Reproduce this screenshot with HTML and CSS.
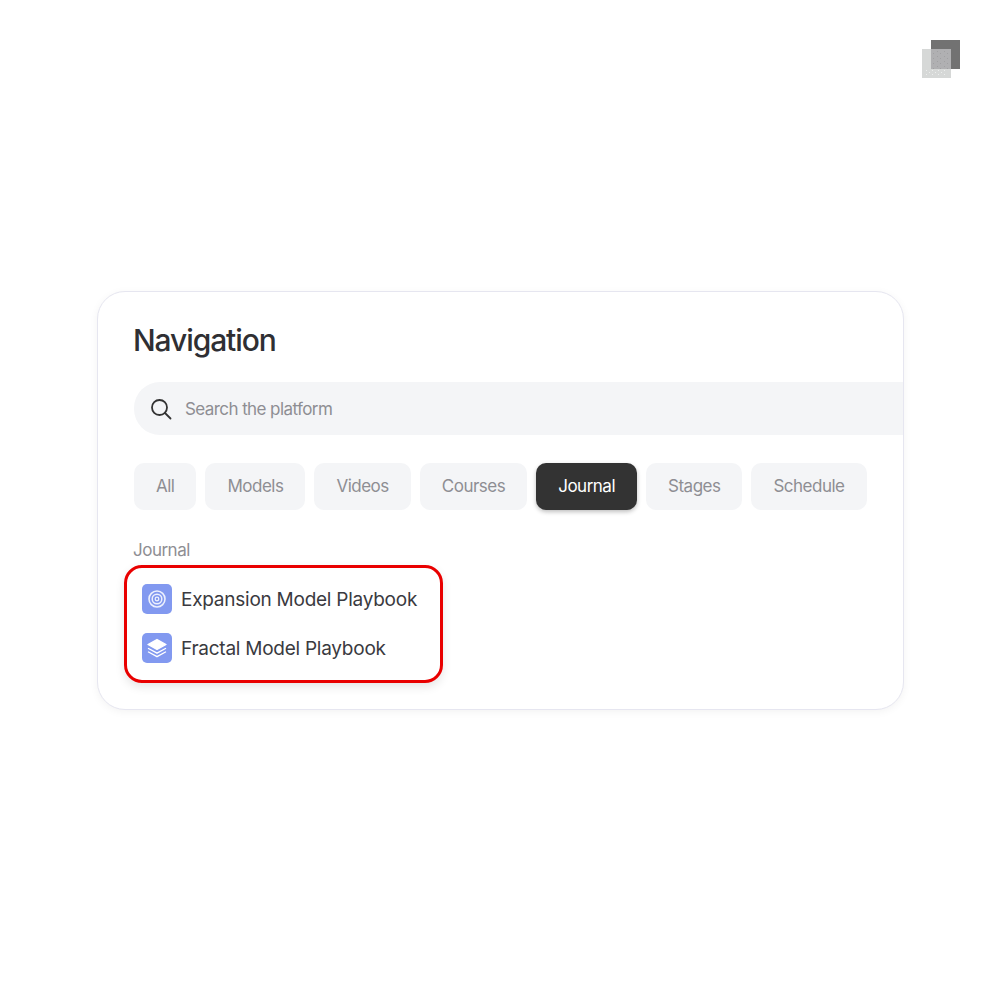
FILE: index.html
```html
<!DOCTYPE html>
<html lang="en">
<head>
  <meta charset="UTF-8">
  <title>Navigation</title>
  <link rel="stylesheet" href="styles.css">
</head>
<body>

  <header class="top">
    <div class="logo">
      <svg width="38" height="38" viewBox="0 0 38 38">
        <defs>
          <pattern id="grain" width="7" height="5" patternUnits="userSpaceOnUse">
            <rect x="1" y="1" width="1" height="1" fill="#a0a0a2"/>
            <rect x="4" y="3" width="1" height="1" fill="#a0a0a2"/>
          </pattern>
          <pattern id="specks" width="6" height="4" patternUnits="userSpaceOnUse">
            <rect x="1" y="0" width="1" height="1" fill="#eceeed"/>
            <rect x="4" y="2" width="1" height="1" fill="#eceeed"/>
          </pattern>
        </defs>
        <rect x="9" y="0" width="29" height="29" fill="#727272"/>
        <rect x="0" y="9" width="29" height="29" fill="#d6d8d7"/>
        <rect x="9" y="9" width="20" height="20" fill="#b0b0b2"/>
        <rect x="9" y="9" width="20" height="20" fill="url(#grain)"/>
        <rect x="2" y="30" width="22" height="6" fill="url(#specks)"/>
      </svg>
    </div>
  </header>

  <main class="card">
    <h1>Navigation</h1>

    <div class="search">
      <svg class="search-icon" width="24" height="24" viewBox="0 0 24 24" fill="none" stroke="#333" stroke-width="1.8" stroke-linecap="round">
        <circle cx="10.5" cy="10.5" r="7.5"/>
        <path d="M16 16l5.5 5.5"/>
      </svg>
      <span>Search the platform</span>
    </div>

    <div class="chips">
      <span class="chip">All</span>
      <span class="chip">Models</span>
      <span class="chip">Videos</span>
      <span class="chip">Courses</span>
      <span class="chip active">Journal</span>
      <span class="chip">Stages</span>
      <span class="chip">Schedule</span>
    </div>

    <div class="section-label">Journal</div>

    <div class="results">
      <div class="result">
        <span class="result-icon">
          <svg width="20" height="20" viewBox="0 0 20 20" fill="none" stroke="#fff">
            <circle cx="10" cy="10" r="8" stroke-width="1.6" stroke-opacity="0.85"/>
            <circle cx="10" cy="10" r="4.8" stroke-width="1.5" stroke-opacity="0.85"/>
            <circle cx="10" cy="10" r="1.8" stroke-width="1.3" stroke-opacity="0.85"/>
          </svg>
        </span>
        Expansion Model Playbook
      </div>
      <div class="result">
        <span class="result-icon">
          <svg width="20" height="20" viewBox="0 0 20 20" fill="none" stroke="#fff" stroke-width="1.4" stroke-linejoin="round" stroke-linecap="round">
            <path d="M10 1.5l9 5-9 5-9-5z" fill="#fff"/>
            <path d="M1.5 10.5l8.5 4.7 8.5-4.7"/>
            <path d="M1.5 14l8.5 4.7 8.5-4.7"/>
          </svg>
        </span>
        Fractal Model Playbook
      </div>
    </div>
  </main>

</body>
</html>
```

FILE: styles.css
```css
/* Page */
body {
  margin: 0;
  height: 1000px;
  background: #fff;
  font-family: 'Inter', 'Liberation Sans', sans-serif;
  color: #333;
}
.top {
  display: flex;
  justify-content: flex-end;
  padding: 40px 40px 0 0;
  height: 290.5px;
  box-sizing: border-box;
}
.logo {
  width: 38px;
  height: 38px;
}
.logo svg {
  display: block;
}
/* Card */
.card {
  box-sizing: border-box;
  width: 807px;
  height: 419px;
  margin-left: 96.5px;
  padding: 29px 0 0 36.5px;
  background: #fff;
  border: 1px solid #e6e6f0;
  border-radius: 28px;
  box-shadow: 0 2px 8px rgba(0, 0, 0, 0.05);
  overflow: hidden;
}
h1 {
  margin: 0 0 0 -1px;
  font-size: 30px;
  line-height: 38px;
  font-weight: 500;
  letter-spacing: -1.1px;
  color: #2f2f33;
}
/* Search */
.search {
  display: flex;
  align-items: center;
  gap: 12px;
  width: 820px;
  height: 53px;
  margin-top: 23.5px;
  padding-left: 15px;
  box-sizing: border-box;
  background: #f4f5f7;
  border-radius: 26px;
  font-size: 17px;
  letter-spacing: -0.58px;
  color: #8e8e93;
}
/* Filters */
.chips {
  display: flex;
  gap: 9px;
  margin-top: 28px;
}
.chip {
  padding: 0 22px;
  height: 47px;
  line-height: 47px;
  background: #f4f5f7;
  border-radius: 10px;
  font-size: 17px;
  letter-spacing: -0.5px;
  color: #8e8e93;
}
.chip.active {
  background: #333;
  color: #fff;
  box-shadow: 0 2px 4px rgba(0, 0, 0, 0.25);
}
/* Results */
.section-label {
  margin: 30px 0 0 -1px;
  font-size: 17px;
  letter-spacing: -0.5px;
  line-height: 20px;
  color: #8e8e93;
}
.results {
  display: flex;
  flex-direction: column;
  gap: 19px;
  width: 319.5px;
  box-sizing: border-box;
  margin: 5px 0 0 -10.5px;
  padding: 16px 0 17px 15.5px;
  border: 3px solid #e90000;
  border-radius: 18px;
  box-shadow: 0 4px 10px rgba(0, 0, 0, 0.1);
}
.result {
  display: flex;
  align-items: center;
  gap: 9px;
  height: 30px;
  font-size: 19px;
  letter-spacing: -0.25px;
  color: #3a3a40;
}
.result-icon {
  display: flex;
  align-items: center;
  justify-content: center;
  width: 30px;
  height: 30px;
  background: #8299f0;
  border-radius: 5px;
}
```
